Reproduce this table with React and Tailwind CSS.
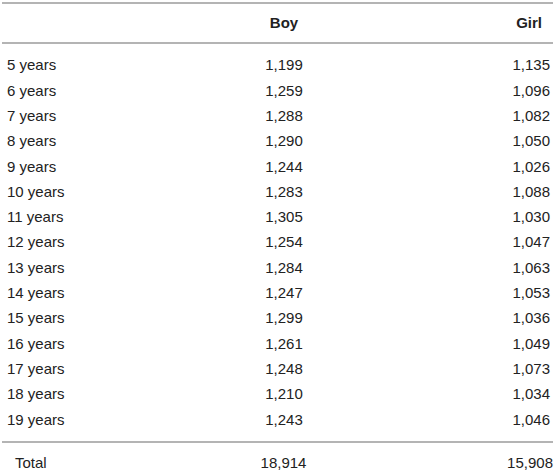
const rows = [
  ["5 years", "1,199", "1,135"],
  ["6 years", "1,259", "1,096"],
  ["7 years", "1,288", "1,082"],
  ["8 years", "1,290", "1,050"],
  ["9 years", "1,244", "1,026"],
  ["10 years", "1,283", "1,088"],
  ["11 years", "1,305", "1,030"],
  ["12 years", "1,254", "1,047"],
  ["13 years", "1,284", "1,063"],
  ["14 years", "1,247", "1,053"],
  ["15 years", "1,299", "1,036"],
  ["16 years", "1,261", "1,049"],
  ["17 years", "1,248", "1,073"],
  ["18 years", "1,210", "1,034"],
  ["19 years", "1,243", "1,046"],
];

const cols = "grid grid-cols-[198px_168px_185px]";

export default function App() {
  return (
    <div
      className="bg-white w-[556px] h-[473px] pt-[2px] text-[15px] text-[#222]"
      style={{ fontFamily: '"Liberation Sans", Arial, sans-serif' }}
    >
      <div className="ml-[2px] w-[551px]">
        <div className={`${cols} h-[42px] items-center border-y-2 border-[#b4b4b4] font-bold`}>
          <div />
          <div className="text-center">Boy</div>
          <div className="text-right pr-[11px]">Girl</div>
        </div>

        <div className="pt-[9px] pb-[9px] border-b-2 border-[#b4b4b4]">
          {rows.map(([label, boy, girl]) => (
            <div key={label} className={`${cols} h-[25.3px] items-center`}>
              <div className="pl-[5px]">{label}</div>
              <div className="text-center">{boy}</div>
              <div className="text-right pr-[3px]">{girl}</div>
            </div>
          ))}
        </div>

        <div className={`${cols} h-[40px] items-center`}>
          <div className="pl-[13px]">Total</div>
          <div className="text-center pr-[1px]">18,914</div>
          <div className="text-right">15,908</div>
        </div>
      </div>
    </div>
  );
}
